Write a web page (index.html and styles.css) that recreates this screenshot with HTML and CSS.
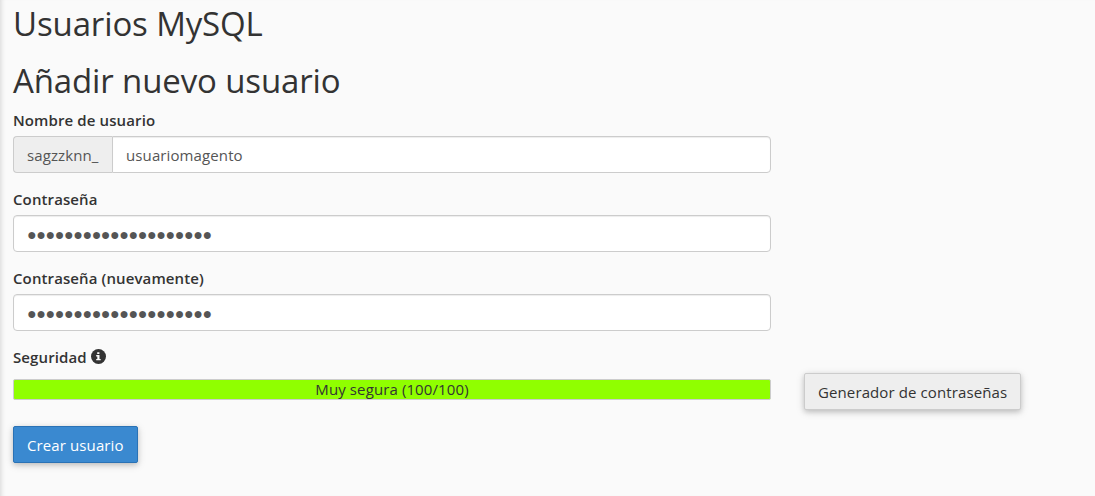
FILE: index.html
```html
<!DOCTYPE html>
<html lang="es">
<head>
	<meta charset="UTF-8">
	<title>Usuarios MySQL</title>
	<link rel="stylesheet" href="styles.css">
</head>
<body>
<main class="content">
	<h2>Usuarios MySQL</h2>
	<h2>Añadir nuevo usuario</h2>
	<form>
		<div class="form-group">
			<label for="user">Nombre de usuario</label>
			<div class="input-group">
				<span class="input-addon">sagzzknn_</span>
				<input class="form-control" id="user" type="text" value="usuariomagento">
			</div>
		</div>
		<div class="form-group">
			<label for="pass1">Contraseña</label>
			<input class="form-control password" id="pass1" type="text" value="●●●●●●●●●●●●●●●●●●●●">
		</div>
		<div class="form-group">
			<label for="pass2">Contraseña (nuevamente)</label>
			<input class="form-control password" id="pass2" type="text" value="●●●●●●●●●●●●●●●●●●●●">
		</div>
		<div class="strength">
			<div class="strength-title">
				<span>Seguridad</span>
				<svg class="info-icon" viewBox="0 0 15 15">
					<circle cx="7.5" cy="7.5" r="7.5" fill="#333"/>
					<path d="M6.2 3.2h2.2v1.8H6.2zM5.2 6h3.3v3.9h1.2v1.4H5.2V9.9h1.1V7.4H5.2z" fill="#fafafa"/>
				</svg>
			</div>
			<div class="strength-row">
				<div class="strength-bar">Muy segura (100/100)</div>
				<button class="btn btn-default" type="button">Generador de contraseñas</button>
			</div>
		</div>
		<button class="btn btn-primary" type="button">Crear usuario</button>
	</form>
</main>
</body>
</html>
```

FILE: styles.css
```css
* {
	box-sizing: border-box;
}

body {
	margin: 0;
	min-height: 100vh;
	font: 15px/22px "Open Sans", sans-serif;
	letter-spacing: .11px;
	color: #333;
	background: #fafafa;
	box-shadow: inset 5px 0 5px -4px rgba(0, 0, 0, .15);
}

.content {
	padding: 6px 13px 0;
}

h2 {
	margin: 0 0 21px;
	font-size: 33px;
	font-weight: 400;
	line-height: 36px;
	letter-spacing: -.13px;
}

h2 + h2 {
	margin-bottom: 10px;
}

.form-group {
	width: 758px;
	margin-bottom: 15px;
}

label {
	display: block;
	margin-bottom: 5px;
	font-weight: 600;
}

.form-control {
	display: block;
	width: 100%;
	height: 37px;
	padding: 0 13px;
	font: inherit;
	letter-spacing: inherit;
	color: #555;
	background: #fff;
	border: 1px solid #ccc;
	border-radius: 4px;
	box-shadow: inset 0 1px 1px rgba(0, 0, 0, .075);
}

.password {
	padding-top: 2px;
	font-family: "Liberation Sans", sans-serif;
	font-size: 16px;
	letter-spacing: -.43px;
}

/* username with its fixed prefix */

.input-group {
	display: flex;
}

.input-addon {
	flex: none;
	width: 99px;
	height: 37px;
	padding: 7px 13px 0;
	color: #555;
	background: #eee;
	border: 1px solid #ccc;
	border-right: 0;
	border-radius: 4px 0 0 4px;
}

.input-group .form-control {
	flex: 1;
	border-radius: 0 4px 4px 0;
}

/* password strength */

.strength-title {
	display: flex;
	gap: 4px;
	font-weight: 600;
}

.info-icon {
	width: 15px;
	height: 15px;
	margin-top: 3px;
}

.strength-row {
	display: flex;
	gap: 33px;
	align-items: flex-start;
	padding-top: 5px;
}

.strength-bar {
	width: 758px;
	height: 21px;
	margin-top: 6px;
	line-height: 18px;
	text-align: center;
	background: #90ff00;
	border: 1px solid #ccc;
	border-radius: 2px;
}

/* buttons */

.btn {
	height: 37px;
	padding: 0 13px;
	font: inherit;
	letter-spacing: inherit;
	border: 1px solid #ccc;
	border-radius: 2px;
	box-shadow: 0 2px 5px rgba(0, 0, 0, .16), 0 2px 10px rgba(0, 0, 0, .12);
}

.btn-default {
	color: #333;
	background: #eee;
}

.btn-primary {
	margin-top: 16px;
	color: #fff;
	background: #3a89d0;
	border-color: #2a72b5;
}
```
